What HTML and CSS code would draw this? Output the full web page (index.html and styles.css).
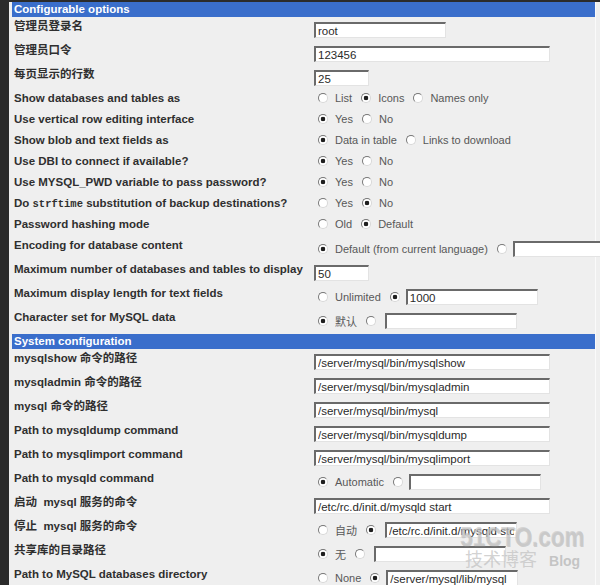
FILE: index.html
```html
<!DOCTYPE html>
<html lang="zh-CN">
  <head>
    <meta charset="UTF-8" />
    <title>MySQL Database Server - Module Config</title>
    <link rel="stylesheet" href="styles.css">
  </head>
  <body>
    <div class="frame">
      <!-- Configurable options -->
      <div class="section">
        <div class="section-title">Configurable options</div>
        <div class="section-body">
          <div class="row field">
            <div class="label">管理员登录名</div>
            <div class="value"><input class="text w-md" type="text" value="root"></div>
          </div>
          <div class="row field">
            <div class="label">管理员口令</div>
            <div class="value"><input class="text w-lg" type="text" value="123456"></div>
          </div>
          <div class="row field">
            <div class="label">每页显示的行数</div>
            <div class="value"><input class="text w-sm" type="text" value="25"></div>
          </div>
          <div class="row">
            <div class="label">Show databases and tables as</div>
            <div class="value">
              <input type="radio" name="style"><span class="opt">List</span>
              <input type="radio" name="style" checked><span class="opt">Icons</span>
              <input type="radio" name="style"><span class="opt">Names only</span>
            </div>
          </div>
          <div class="row">
            <div class="label">Use vertical row editing interface</div>
            <div class="value">
              <input type="radio" name="vertical" checked><span class="opt">Yes</span>
              <input type="radio" name="vertical"><span class="opt">No</span>
            </div>
          </div>
          <div class="row">
            <div class="label">Show blob and text fields as</div>
            <div class="value">
              <input type="radio" name="blob" checked><span class="opt">Data in table</span>
              <input type="radio" name="blob"><span class="opt">Links to download</span>
            </div>
          </div>
          <div class="row">
            <div class="label">Use DBI to connect if available?</div>
            <div class="value">
              <input type="radio" name="dbi" checked><span class="opt">Yes</span>
              <input type="radio" name="dbi"><span class="opt">No</span>
            </div>
          </div>
          <div class="row">
            <div class="label">Use MYSQL_PWD variable to pass password?</div>
            <div class="value">
              <input type="radio" name="pwd" checked><span class="opt">Yes</span>
              <input type="radio" name="pwd"><span class="opt">No</span>
            </div>
          </div>
          <div class="row">
            <div class="label">Do <tt>strftime</tt> substitution of backup destinations?</div>
            <div class="value">
              <input type="radio" name="strftime"><span class="opt">Yes</span>
              <input type="radio" name="strftime" checked><span class="opt">No</span>
            </div>
          </div>
          <div class="row">
            <div class="label">Password hashing mode</div>
            <div class="value">
              <input type="radio" name="hash"><span class="opt">Old</span>
              <input type="radio" name="hash" checked><span class="opt">Default</span>
            </div>
          </div>
          <div class="row field">
            <div class="label">Encoding for database content</div>
            <div class="value">
              <input type="radio" name="encoding" checked><span class="opt">Default (from current language)</span>
              <input type="radio" name="encoding"><input class="text w-enc" type="text" value="">
            </div>
          </div>
          <div class="row field">
            <div class="label">Maximum number of databases and tables to display</div>
            <div class="value"><input class="text w-sm" type="text" value="50"></div>
          </div>
          <div class="row field">
            <div class="label">Maximum display length for text fields</div>
            <div class="value">
              <input type="radio" name="maxlen"><span class="opt">Unlimited</span>
              <input type="radio" name="maxlen" checked><input class="text w-md" type="text" value="1000">
            </div>
          </div>
          <div class="row field">
            <div class="label">Character set for MySQL data</div>
            <div class="value">
              <input type="radio" name="charset" checked><span class="opt">默认</span>
              <input type="radio" name="charset"><input class="text w-md gap" type="text" value="">
            </div>
          </div>
        </div>
      </div>

      <!-- System configuration -->
      <div class="section">
        <div class="section-title">System configuration</div>
        <div class="section-body">
          <div class="row field">
            <div class="label">mysqlshow 命令的路径</div>
            <div class="value"><input class="text w-lg" type="text" value="/server/mysql/bin/mysqlshow"></div>
          </div>
          <div class="row field">
            <div class="label">mysqladmin 命令的路径</div>
            <div class="value"><input class="text w-lg" type="text" value="/server/mysql/bin/mysqladmin"></div>
          </div>
          <div class="row field">
            <div class="label">mysql 命令的路径</div>
            <div class="value"><input class="text w-lg" type="text" value="/server/mysql/bin/mysql"></div>
          </div>
          <div class="row field">
            <div class="label">Path to mysqldump command</div>
            <div class="value"><input class="text w-lg" type="text" value="/server/mysql/bin/mysqldump"></div>
          </div>
          <div class="row field">
            <div class="label">Path to mysqlimport command</div>
            <div class="value"><input class="text w-lg" type="text" value="/server/mysql/bin/mysqlimport"></div>
          </div>
          <div class="row field">
            <div class="label">Path to mysqld command</div>
            <div class="value">
              <input type="radio" name="mysqld" checked><span class="opt">Automatic</span>
              <input type="radio" name="mysqld"><input class="text w-md" type="text" value="">
            </div>
          </div>
          <div class="row field">
            <div class="label">启动&nbsp; mysql 服务的命令</div>
            <div class="value"><input class="text w-lg" type="text" value="/etc/rc.d/init.d/mysqld start"></div>
          </div>
          <div class="row field">
            <div class="label">停止&nbsp; mysql 服务的命令</div>
            <div class="value">
              <input type="radio" name="stop"><span class="opt">自动</span>
              <input type="radio" name="stop" checked><input class="text w-md gap" type="text" value="/etc/rc.d/init.d/mysqld stop">
            </div>
          </div>
          <div class="row field">
            <div class="label">共享库的目录路径</div>
            <div class="value">
              <input type="radio" name="libs" checked><span class="opt">无</span>
              <input type="radio" name="libs"><input class="text w-md gap" type="text" value="">
            </div>
          </div>
          <div class="row field">
            <div class="label">Path to MySQL databases directory</div>
            <div class="value">
              <input type="radio" name="datadir"><span class="opt">None</span>
              <input type="radio" name="datadir" checked><input class="text w-md" type="text" value="/server/mysql/lib/mysql">
            </div>
          </div>
        </div>
      </div>
    </div>

    <!-- blog watermark -->
    <div class="watermark">
      <div class="wm-site">51CTO.com</div>
      <div class="wm-sub">技术博客 <span class="wm-blog">Blog</span></div>
    </div>
  </body>
</html>
```

FILE: styles.css
```css
/* --- Reset --- */
* {
  margin: 0;
  padding: 0;
  box-sizing: border-box;
}

body {
  font-family: "Liberation Sans", Arial, "Noto Sans CJK SC", sans-serif;
  font-size: 11.5px;
  background-color: #efefef;
  height: 100vh;
  overflow: hidden;
  position: relative;
}

/* --- Outer frame (dark window edge on the left and top) --- */
.frame {
  border-left: 9px solid #2b2b2b;
  border-top: 2px solid #2b2b2b;
  padding-left: 3px;
  min-height: 100vh;
}

.section {
  width: 584px;
  border-right: 1px solid #fafafa;
}

.section-title {
  height: 15px;
  line-height: 15px;
  padding-left: 2px;
  background-color: #3a6ecb;
  color: #fff;
  font-weight: bold;
}

.section-body {
  padding-top: 2px;
}

/* --- Option rows --- */
.row {
  display: flex;
  align-items: flex-start;
  height: 21px;
}
.row.field {
  height: 24px;
}

.label {
  width: 302px;
  flex-shrink: 0;
  padding-left: 2px;
  line-height: 14px;
  font-weight: bold;
  color: #2f2f2f;
  white-space: nowrap;
}
.label tt {
  font-family: "Liberation Mono", "Courier New", monospace;
  font-size: 10.5px;
}

.value {
  display: flex;
  align-items: center;
  height: 14px;
  white-space: nowrap;
}
.field .value {
  height: 16px;
  margin-top: 3px;
}

.opt {
  font-size: 11px;
  color: #585858;
  margin-right: 9px;
}

/* --- Classic radio buttons --- */
input[type="radio"] {
  appearance: none;
  -webkit-appearance: none;
  flex-shrink: 0;
  width: 10px;
  height: 10px;
  margin: 0 7px 0 0;
  border-radius: 50%;
  border: 1px solid;
  border-color: #777 #d8d8d8 #d8d8d8 #777;
  background: #fff;
}
.value > input[type="radio"]:first-child {
  margin-left: 4px;
}
input[type="radio"]:checked {
  background: radial-gradient(circle, #1e1e1e 0 2px, #fff 2.6px);
}
input[type="radio"] + .text {
  margin-left: -1px;
}
input[type="radio"] + .text.gap {
  margin-left: 2px;
}

/* --- Text fields --- */
.text {
  flex-shrink: 0;
  height: 16px;
  padding: 0 2px;
  font-family: "Liberation Sans", Arial, sans-serif;
  font-size: 11.5px;
  color: #2a2a2a;
  background: #fff;
  border-style: solid;
  border-width: 2px 1px 1px 2px;
  border-color: #6a6a6a #e3e3e3 #e3e3e3 #6a6a6a;
  outline: none;
}
.w-sm { width: 55px; }
.w-md { width: 132px; }
.w-lg { width: 236px; }
.w-enc { width: 92px; }

/* --- Blog watermark over the bottom right --- */
.watermark {
  position: absolute;
  left: 460px;
  top: 525px;
  pointer-events: none;
}
.wm-site {
  font-family: "Liberation Sans", sans-serif;
  font-size: 28px;
  font-weight: bold;
  line-height: 23px;
  color: rgba(200, 200, 200, 0.7);
  text-shadow: 1px 1px 0 rgba(140, 140, 140, 0.35);
  transform: scaleX(0.8);
  transform-origin: left center;
}
.wm-sub {
  font-family: "Noto Sans CJK SC", sans-serif;
  font-size: 18px;
  line-height: 20px;
  padding-left: 5px;
  color: rgba(195, 195, 195, 0.75);
}
.wm-blog {
  font-family: "Liberation Sans", sans-serif;
  font-size: 14px;
  font-weight: bold;
  margin-left: 8px;
  color: rgba(185, 185, 185, 0.8);
}
```
